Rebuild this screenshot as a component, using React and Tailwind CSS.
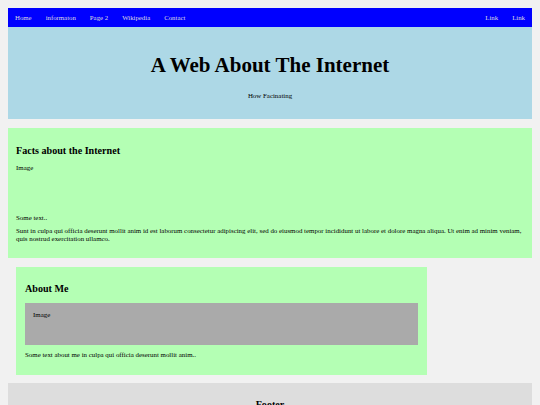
import React from "react";

const serif = "font-['Liberation_Serif','Times_New_Roman',serif]";

function NavLink({ children }) {
  return <a className="px-[7px] text-[6.8px] leading-[8px] text-[#dddddd]">{children}</a>;
}

export default function App() {
  return (
    <div className={`min-h-[405px] bg-[#f1f1f1] p-[8px] text-black ${serif}`}>
      <nav className="flex h-[19px] items-center justify-between bg-[#0000ff]">
        <div className="flex">
          <NavLink>Home</NavLink>
          <NavLink>informaton</NavLink>
          <NavLink>Page 2</NavLink>
          <NavLink>Wikipedia</NavLink>
          <NavLink>Contact</NavLink>
        </div>
        <div className="flex">
          <NavLink>Link</NavLink>
          <NavLink>Link</NavLink>
        </div>
      </nav>

      <header className="bg-[#add8e6] pt-[26px] pb-[19px] text-center">
        <h1 className="text-[21px] font-bold leading-[24px]">A Web About The Internet</h1>
        <p className="mt-[15px] text-[6.9px] leading-[8px]">How Facinating</p>
      </header>

      <section className="mt-[9px] bg-[#b4ffb4] px-[8px] pt-[17px] pb-[15px]">
        <h2 className="text-[10.1px] font-bold leading-[12px]">Facts about the Internet</h2>
        <p className="mt-[7px] h-[50px] text-[6.9px] leading-[8px]">Image</p>
        <p className="text-[6.9px] leading-[8px]">Some text..</p>
        <p className="mt-[5px] text-[6.9px] leading-[8px]">
          Sunt in culpa qui officia deserunt mollit anim id est laborum consectetur adipiscing elit, sed do eiusmod tempor incididunt ut labore et dolore magna aliqua. Ut enim ad minim veniam, quis nostrud exercitation ullamco.
        </p>
      </section>

      <section className="mt-[9px] ml-[8px] w-[411px] bg-[#b4ffb4] px-[9px] pt-[16px] pb-[16px]">
        <h2 className="text-[10.1px] font-bold leading-[12px]">About Me</h2>
        <div className="mt-[8px] h-[42px] bg-[#aaaaaa] px-[8px] pt-[8px]">
          <p className="text-[6.9px] leading-[8px]">Image</p>
        </div>
        <p className="mt-[6px] text-[6.9px] leading-[8px]">
          Some text about me in culpa qui officia deserunt mollit anim..
        </p>
      </section>

      <footer className="mt-[8px] bg-[#dddddd] pt-[16px] pb-[16px] text-center">
        <h2 className="text-[10.1px] font-bold leading-[12px]">Footer</h2>
      </footer>
    </div>
  );
}
